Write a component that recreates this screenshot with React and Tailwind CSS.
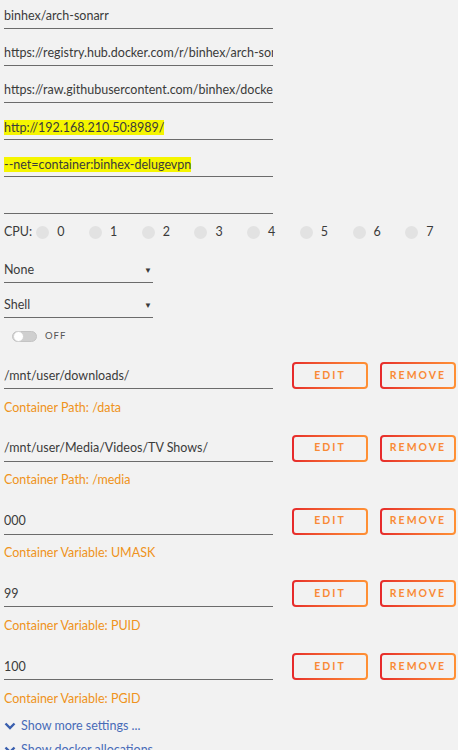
import React from "react";

const font = { fontFamily: 'Lato, "Noto Sans", sans-serif' };

function Line({ children, highlight }) {
  return (
    <div className="w-[269px] h-[25px] border-b border-[#6b6b6b] flex items-center overflow-hidden whitespace-nowrap text-[12.5px] text-[#3b3b3b]">
      {highlight ? <span className="bg-[#f5f500] leading-[15px]">{children}</span> : children}
    </div>
  );
}

function Btn({ children }) {
  return (
    <div className="w-[76px] h-[27px] rounded-[4px] p-[2px] bg-gradient-to-r from-[#e6282b] to-[#ff9135]">
      <div className="w-full h-full rounded-[2px] bg-[#f2f2f2] flex items-center justify-center text-[10.5px] font-bold tracking-[2px] text-[#f98a36]">
        {children}
      </div>
    </div>
  );
}

function Entry({ value, label }) {
  return (
    <div className="flex flex-col">
      <div className="flex items-end">
        <Line>{value}</Line>
        <div className="ml-[19px] flex gap-[12px]">
          <Btn>EDIT</Btn>
          <Btn>REMOVE</Btn>
        </div>
      </div>
      <div className="h-[16px] mt-[11px] flex items-center text-[12.5px] text-[#ef9320]">{label}</div>
    </div>
  );
}

export default function App() {
  const cpus = [0, 1, 2, 3, 4, 5, 6, 7];
  return (
    <div className="w-[458px] h-[750px] bg-[#f2f2f2] overflow-hidden pl-[4px] pt-[4px]" style={font}>
      <div className="flex flex-col gap-[12px]">
        <Line>binhex/arch-sonarr</Line>
        <Line>https://registry.hub.docker.com/r/binhex/arch-sonarr/</Line>
        <Line>https://raw.githubusercontent.com/binhex/docker-templates/master/binhex/images/sonarr-icon.png</Line>
        <Line highlight>http://192.168.210.50:8989/</Line>
        <Line highlight>--net=container:binhex-delugevpn</Line>
        <Line>{""}</Line>
      </div>
      <div className="mt-[10px] h-[16px] flex items-center text-[12.5px] text-[#3b3b3b]">
        <span className="w-[33px]">CPU:</span>
        {cpus.map((c) => (
          <div key={c} className="w-[54px] flex items-center">
            <span className="w-[13px] h-[13px] rounded-full bg-[#e2e2e2]"></span>
            <span className="ml-[8px]">{c}</span>
          </div>
        ))}
      </div>
      <div className="mt-[18px] flex flex-col gap-[10px]">
        <div className="w-[149px] h-[25px] border-b border-[#6b6b6b] flex items-center justify-between text-[12.5px] text-[#3b3b3b] pr-[1px]">
          <span>None</span>
          <span className="text-[8px]">▼</span>
        </div>
        <div className="w-[149px] h-[25px] border-b border-[#6b6b6b] flex items-center justify-between text-[12.5px] text-[#3b3b3b] pr-[1px]">
          <span>Shell</span>
          <span className="text-[8px]">▼</span>
        </div>
      </div>
      <div className="mt-[12px] ml-[8px] h-[12px] flex items-center">
        <div className="relative w-[25px] h-[11px] rounded-full bg-[#cfcfcf] border border-[#c4c4c4]">
          <span className="absolute left-0 top-[-1px] w-[11px] h-[11px] rounded-full bg-white border border-[#d0d0d0]"></span>
        </div>
        <span className="ml-[8px] text-[9.5px] tracking-[1px] text-[#555]">OFF</span>
      </div>
      <div className="mt-[20px] flex flex-col gap-[18.75px]">
        <Entry value="/mnt/user/downloads/" label="Container Path: /data" />
        <Entry value="/mnt/user/Media/Videos/TV Shows/" label="Container Path: /media" />
        <Entry value="000" label="Container Variable: UMASK" />
        <Entry value="99" label="Container Variable: PUID" />
        <Entry value="100" label="Container Variable: PGID" />
      </div>
      <div className="mt-[11px] flex flex-col gap-[8px] text-[12.5px] text-[#486bb8]">
        <div className="flex items-center h-[16px]">
          <svg width="12" height="12" viewBox="0 0 12 12" className="mr-[5px]">
            <path d="M1.5 3.5 L6 8 L10.5 3.5" fill="none" stroke="#3a5fae" strokeWidth="2.4" />
          </svg>
          Show more settings ...
        </div>
        <div className="flex items-center h-[16px]">
          <svg width="12" height="12" viewBox="0 0 12 12" className="mr-[5px]">
            <path d="M1.5 3.5 L6 8 L10.5 3.5" fill="none" stroke="#3a5fae" strokeWidth="2.4" />
          </svg>
          Show docker allocations ...
        </div>
      </div>
    </div>
  );
}
